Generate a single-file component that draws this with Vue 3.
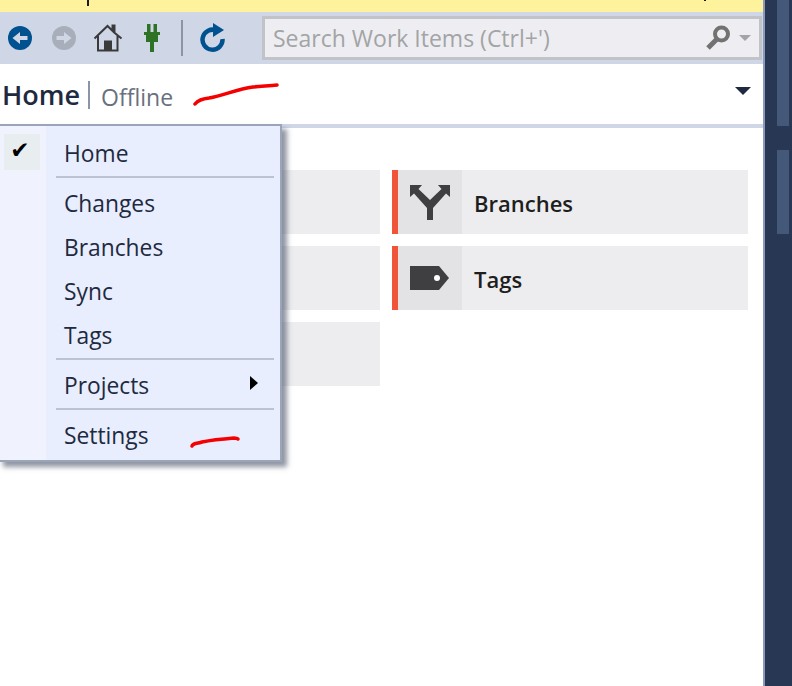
<script setup>
const tiles = [
  { name: '', hidden: true },
  { name: 'Branches', icon: 'branch' },
  { name: '', hidden: true },
  { name: 'Tags', icon: 'tag' },
  { name: '', hidden: true }
]
const groups = [['Home'], ['Changes', 'Branches', 'Sync', 'Tags'], ['Projects'], ['Settings']]
</script>

<template>
  <div class="window">
    <div class="main">
      <div class="notice">
        <i class="mark mark-a"></i>
        <i class="mark mark-b"></i>
      </div>
      <div class="toolbar">
        <svg class="tool back" width="24" height="24" viewBox="0 0 24 24">
          <circle cx="12" cy="12" r="12" fill="#00518f" />
          <path d="M19.500 10h-7.500V6L4.500 12l7.500 6v-4h7.500z" fill="#cfd6e5" />
        </svg>
        <svg class="tool fwd" width="24" height="24" viewBox="0 0 24 24">
          <circle cx="12" cy="12" r="12" fill="#a9afba" />
          <path d="M4.500 10h7.500V6l7.500 6-7.500 6v-4H4.500z" fill="#cfd6e5" />
        </svg>
        <svg class="tool home" width="30" height="30" viewBox="0 0 30 30">
          <path d="M1.500 15.500 14.500 3l5 4.800V2.500h2v7.200l7 5.800M5 13v14.500h19.500V13" fill="none" stroke="#3a3a3a" stroke-width="2" />
          <path d="M11 17.500h8v10h-8z" fill="#3a3a3a" />
        </svg>
        <svg class="tool plug" width="16" height="28" viewBox="0 0 16 28">
          <path d="M3 0h3.500v8h3V0H13v8h3v3h-2v7h-4v10H6V18H2v-7H0V8h3z" fill="#2e7226" />
        </svg>
        <span class="tool-sep"></span>
        <svg class="tool refresh" width="26" height="30" viewBox="0 0 26 30">
          <path d="M16.500 7.500A10 10 0 1 0 22.500 16" fill="none" stroke="#00518f" stroke-width="4.500" />
          <path d="M13 0l11 7-11 7z" fill="#00518f" />
        </svg>
        <div class="search">
          <span class="placeholder">Search Work Items (Ctrl+')</span>
          <svg class="lens" width="28" height="28" viewBox="0 0 28 28">
            <circle cx="17.500" cy="10" r="6.500" fill="none" stroke="#727272" stroke-width="4" />
            <path d="M12.500 15.500 4 24" stroke="#727272" stroke-width="5" />
          </svg>
          <span class="search-caret"></span>
        </div>
      </div>
      <div class="header">
        <span class="title">Home</span>
        <span class="title-sep"></span>
        <span class="status">Offline</span>
        <span class="header-caret"></span>
      </div>
      <div class="content">
        <div v-for="(tile, i) in tiles" :key="i" class="tile" :class="{ blank: tile.hidden }">
          <template v-if="!tile.hidden">
            <span class="accent"></span>
            <span class="tile-icon">
              <svg v-if="tile.icon === 'branch'" width="42" height="36" viewBox="0 0 42 36">
                <path d="M1 1h12L9.500 5 21 16 32.500 5 29 1h12v12l-4-3.500L24 24v12h-6V24L5 9.500 1 13z" fill="#3f3f41" />
              </svg>
              <svg v-else width="40" height="24" viewBox="0 0 40 24">
                <path d="M0 0h29l10 12-10 12H0z" fill="#3f3f41" />
                <circle cx="27" cy="12" r="3" fill="#fff" />
              </svg>
            </span>
            <span class="tile-name">{{ tile.name }}</span>
          </template>
        </div>
      </div>

      <div class="menu">
        <div class="gutter">
          <span class="check">&#10004;</span>
        </div>
        <div class="menu-body">
          <template v-for="(group, g) in groups" :key="g">
            <div v-if="g > 0" class="menu-sep"></div>
            <div v-for="item in group" :key="item" class="menu-item">
              <span>{{ item }}</span>
              <span v-if="item === 'Projects'" class="submenu"></span>
            </div>
          </template>
        </div>
      </div>

      <svg class="scribble scribble-a" width="90" height="30" viewBox="0 0 90 30">
        <path d="M2 23c3-4 7-5 14-6 16-3 28-9 44-11 8-1 16-1 24-2" fill="none" stroke="#f40000" stroke-width="3.500" stroke-linecap="round" />
      </svg>
      <svg class="scribble scribble-b" width="56" height="20" viewBox="0 0 56 20">
        <path d="M3 13c1-3 4-2 10-4 10-2 20-3 32-4 2 0 3 0 4 1" fill="none" stroke="#f40000" stroke-width="3.500" stroke-linecap="round" />
      </svg>
    </div>
    <div class="rail">
      <span class="rail-thumb first"></span>
      <span class="rail-thumb second"></span>
    </div>
  </div>
</template>

<style scoped>
.window {
  display: flex;
  width: 792px;
  height: 686px;
  overflow: hidden;
  background: #fff;
  font-family: "Open Sans", "Noto Sans", sans-serif;
}
.main {
  position: relative;
  flex: none;
  width: 763px;
  display: flex;
  flex-direction: column;
}
.notice {
  position: relative;
  height: 12px;
  background: #fff29d;
}
.mark {
  position: absolute;
  top: 0;
  width: 2px;
  background: #1a1a1a;
}
.mark-a { left: 87px; height: 6px; }
.mark-b { left: 704px; height: 1px; }
.toolbar {
  height: 52px;
  background: #cfd6e5;
  display: flex;
  align-items: center;
  padding-left: 8px;
}
.tool { flex: none; display: block; }
.fwd { margin-left: 20px; }
.home { margin-left: 17px; }
.plug { margin: 0 1px 0 21px; }
.tool-sep {
  width: 2px;
  height: 36px;
  margin-left: 20px;
  background: #8b95a8;
}
.refresh { margin-left: 17px; }
.search {
  flex: none;
  width: 500px;
  height: 44px;
  margin-left: 36px;
  box-sizing: border-box;
  border: 3px solid #c2c3c9;
  background: #eeeef2;
  display: flex;
  align-items: center;
  padding: 0 8px;
}
.placeholder {
  flex: 1;
  font-size: 23px;
  color: #a2a4a5;
  white-space: nowrap;
}
.lens { flex: none; margin-right: 7px; }
.search-caret {
  width: 0;
  height: 0;
  border-left: 6px solid transparent;
  border-right: 6px solid transparent;
  border-top: 6px solid #a2a4a5;
}
.header {
  height: 60px;
  display: flex;
  align-items: center;
  padding-left: 2px;
  border-bottom: 4px solid #cfd6e5;
}
.title {
  font-size: 27px;
  font-weight: 600;
  color: #1e2a40;
}
.title-sep {
  width: 2px;
  height: 28px;
  margin: 2px 11px 0 8px;
  background: #8b95a8;
}
.status {
  font-size: 23px;
  color: #68707e;
  margin-top: 5px;
}
.header-caret {
  margin-left: auto;
  margin-right: 12px;
  margin-top: -6px;
  width: 0;
  height: 0;
  border-left: 8px solid transparent;
  border-right: 8px solid transparent;
  border-top: 8px solid #1e2a40;
}
.content {
  display: grid;
  grid-template-columns: 356px 356px;
  grid-auto-rows: 64px;
  gap: 12px;
  padding: 42px 0 0 24px;
}
.tile {
  display: flex;
  align-items: center;
  background: #ededef;
}
.accent { align-self: stretch; width: 6px; background: #f05539; }
.tile-icon {
  align-self: stretch;
  width: 64px;
  display: flex;
  align-items: center;
  justify-content: center;
  background: #e3e3e5;
}
.tile-name {
  margin: 1px 0 0 12px;
  font-size: 22px;
  font-weight: 600;
  color: #1e1e1e;
}
.menu {
  position: absolute;
  left: -2px;
  top: 124px;
  width: 284px;
  height: 338px;
  box-sizing: border-box;
  display: flex;
  border: 2px solid #9aa5ba;
  background: #e8eefd;
  box-shadow: 5px 5px 5px rgba(70, 80, 100, 0.6);
}
.gutter {
  flex: none;
  width: 46px;
  background: #f0f3fe;
  padding: 8px 0 0 4px;
  box-sizing: border-box;
}
.check {
  display: flex;
  width: 36px;
  height: 36px;
  padding: 0 4px 4px 0;
  box-sizing: border-box;
  align-items: center;
  justify-content: center;
  background: #e8edf0;
  color: #000;
  font-size: 23px;
  line-height: 1;
  font-family: "DejaVu Sans", sans-serif;
}
.menu-body {
  flex: 1;
  padding: 5px 6px 0 10px;
  display: flex;
  flex-direction: column;
}
.menu-item {
  height: 44px;
  flex: none;
  display: flex;
  align-items: center;
  justify-content: space-between;
  padding: 0 16px 0 8px;
  font-size: 22.800px;
  color: #1e2a40;
}
.menu-sep {
  flex: none;
  height: 2px;
  margin: 1px 0 3px;
  background: #bcc2d3;
}
.submenu {
  width: 0;
  height: 0;
  margin-top: -4px;
  border-top: 7px solid transparent;
  border-bottom: 7px solid transparent;
  border-left: 8px solid #000;
}
.scribble { position: absolute; }
.scribble-a { left: 193px; top: 81px; }
.scribble-b { left: 189px; top: 433px; }
.rail {
  flex: 1;
  box-sizing: border-box;
  border-left: 2px solid #8c99ba;
  background: #283754;
  position: relative;
}
.rail-thumb {
  position: absolute;
  left: 12px;
  width: 12px;
  background: #44587a;
}
.first { top: 0; height: 126px; }
.second { top: 150px; height: 84px; }
</style>

<style>
html, body { margin: 0; background: #fff; }
</style>
